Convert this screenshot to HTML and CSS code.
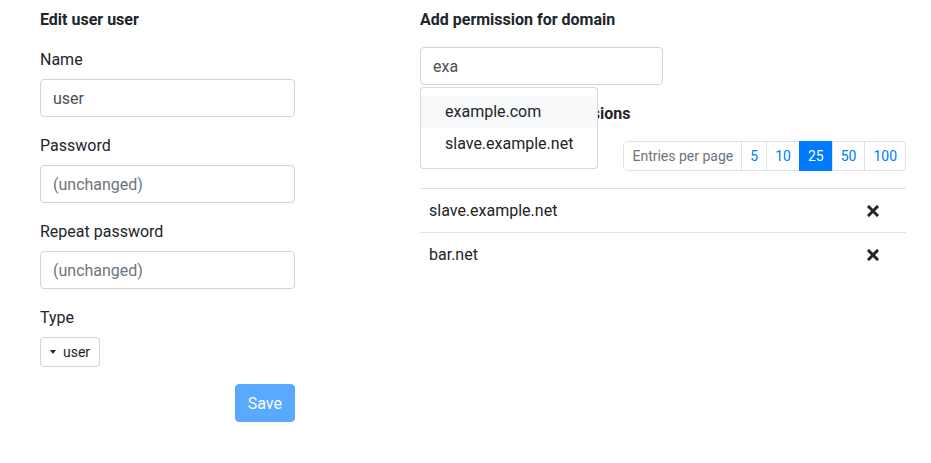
FILE: index.html
```html
<!DOCTYPE html>
<html lang="en">
<head>
    <meta charset="UTF-8">
    <title>Edit user</title>
    <link rel="stylesheet" href="styles.css">
</head>
<body>

<div class="page">
    <!-- Formulaire utilisateur -->
    <form class="user-form">
        <h5 class="title">Edit user user</h5>

        <div class="form-group">
            <label>Name</label>
            <input class="form-control" type="text" value="user">
        </div>
        <div class="form-group">
            <label>Password</label>
            <input class="form-control" type="password" placeholder="(unchanged)">
        </div>
        <div class="form-group">
            <label>Repeat password</label>
            <input class="form-control" type="password" placeholder="(unchanged)">
        </div>
        <div class="form-group">
            <label>Type</label>
            <div>
                <button class="btn-select" type="button"><span class="caret"></span>user</button>
            </div>
        </div>

        <div class="form-actions">
            <button class="btn-save" type="button" disabled>Save</button>
        </div>
    </form>

    <!-- Permissions -->
    <div class="permissions">
        <h5 class="title">Add permission for domain</h5>

        <div class="autocomplete">
            <input class="form-control" type="text" value="exa">
            <div class="dropdown-menu">
                <div class="dropdown-item active">example.com</div>
                <div class="dropdown-item">slave.example.net</div>
            </div>
        </div>

        <h5 class="title perm-title">Existing domain permissions</h5>

        <div class="pager-row">
            <ul class="pagination">
                <li class="page-label">Entries per page</li>
                <li>5</li>
                <li>10</li>
                <li class="active">25</li>
                <li>50</li>
                <li>100</li>
            </ul>
        </div>

        <table class="perm-table">
            <tr>
                <td>slave.example.net</td>
                <td class="col-action"><svg class="icon-remove" viewBox="0 0 12 12"><path d="M2 2 L10 10 M10 2 L2 10" /></svg></td>
            </tr>
            <tr>
                <td>bar.net</td>
                <td class="col-action"><svg class="icon-remove" viewBox="0 0 12 12"><path d="M2 2 L10 10 M10 2 L2 10" /></svg></td>
            </tr>
        </table>
    </div>
</div>

</body>
</html>
```

FILE: styles.css
```css
/* Général */
body {
    margin: 0;
    font-family: Roboto, "Liberation Sans", sans-serif;
    font-size: 16px;
    line-height: 1.5;
    color: #212529;
    background: #fff;
}

.page {
    display: flex;
    gap: 125px;
    padding: 7px 25px 0 40px;
}

.user-form {
    width: 255px;
}

.permissions {
    width: 486px;
}

.title {
    margin: 0 0 15px;
    padding-top: 1px;
    font-size: 16px;
    font-weight: bold;
    line-height: 24px;
}

/* Champs */
.form-group {
    margin-bottom: 16px;
}

.form-group label {
    display: block;
    padding-top: 1px;
    margin-bottom: 7px;
}

.form-control {
    display: block;
    box-sizing: border-box;
    width: 100%;
    height: 38px;
    padding: 6px 12px;
    font-family: inherit;
    font-size: 16px;
    line-height: 24px;
    color: #495057;
    background: #fff;
    border: 1px solid #ced4da;
    border-radius: 4px;
}

.form-control::placeholder {
    color: #6c757d;
}

.btn-select {
    display: inline-flex;
    align-items: center;
    height: 30px;
    padding: 0 9px 0 9px;
    font-family: inherit;
    font-size: 14px;
    color: #212529;
    background: #fff;
    border: 1px solid #ced4da;
    border-radius: 4px;
}

.caret {
    width: 0;
    height: 0;
    margin-right: 7px;
    border-left: 3px solid transparent;
    border-right: 3px solid transparent;
    border-top: 4px solid #212529;
}

.form-actions {
    display: flex;
    justify-content: flex-end;
}

.btn-save {
    height: 38px;
    padding: 6px 12px;
    margin-top: 1px;
    font-family: inherit;
    font-size: 16px;
    color: #fff;
    background: #59a9ff;
    border: 1px solid #59a9ff;
    border-radius: 4px;
}

/* Autocomplete */
.autocomplete {
    position: relative;
    width: 243px;
    margin-bottom: 16px;
}

.dropdown-menu {
    position: absolute;
    top: 100%;
    left: 0;
    z-index: 10;
    margin-top: 2px;
    padding: 8px 0;
    white-space: nowrap;
    background: #fff;
    border: 1px solid rgba(0, 0, 0, 0.15);
    border-radius: 4px;
}

.dropdown-item {
    padding: 4px 24px;
    color: #212529;
}

.dropdown-item.active {
    background: #f8f9fa;
}

.perm-title {
    position: relative;
    padding-left: 3px;
}

.perm-title::before {
    content: '';
    position: absolute;
    left: 0;
    top: 4px;
    width: 2px;
    height: 17px;
    background: #f0d94a;
}

/* Pagination */
.pager-row {
    display: flex;
    justify-content: flex-end;
    margin-bottom: 17px;
}

.pagination {
    display: flex;
    margin: 0;
    padding: 0;
    list-style: none;
    font-size: 14px;
    line-height: 20px;
}

.pagination li {
    padding: 4px 8px;
    color: #007bff;
    border: 1px solid #dee2e6;
    margin-left: -1px;
}

.pagination li:first-child {
    margin-left: 0;
    border-radius: 4px 0 0 4px;
}

.pagination li:last-child {
    border-radius: 0 4px 4px 0;
}

.pagination .page-label {
    color: #6c757d;
}

.pagination li.active {
    color: #fff;
    background: #007bff;
    border-color: #007bff;
}

/* Tableau */
.perm-table {
    width: 100%;
    border-collapse: collapse;
}

.perm-table td {
    padding: 10px 9px 9px;
    border-top: 1px solid #dee2e6;
}

.perm-table .col-action {
    width: 40px;
    padding-right: 27px;
    text-align: right;
}

.icon-remove {
    display: inline-block;
    width: 12px;
    height: 12px;
    vertical-align: -1px;
    stroke: #212529;
    stroke-width: 3;
    stroke-linecap: square;
}
```
